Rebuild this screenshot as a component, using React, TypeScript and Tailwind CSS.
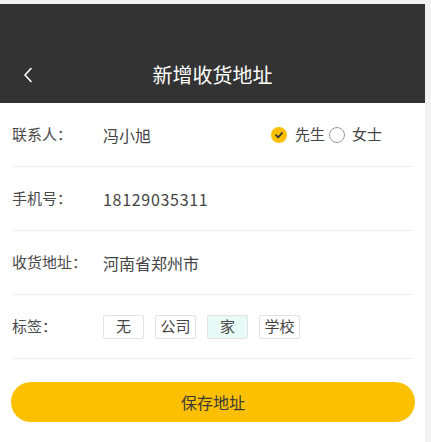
import React from "react";

const font = { fontFamily: '"Noto Sans CJK SC", "Noto Sans", sans-serif' };

function Row({ label, children }: { label: string; children: React.ReactNode }) {
  return (
    <div className="flex h-[64px] items-center border-b border-[#eeeeee]">
      <div className="w-[91px] text-[15px] text-[#4a4a4a]">{label}</div>
      {children}
    </div>
  );
}

export default function App() {
  const tags = ["无", "公司", "家", "学校"];
  return (
    <div className="h-[442px] w-[431px] bg-[#f2f2f2] pt-[4px]" style={font}>
      <div className="h-[438px] w-[425px] bg-white">
        <div className="h-[99px] bg-[#333333] pt-[43px]">
          <div className="relative flex h-[56px] items-center justify-center">
            <svg
              className="absolute left-[22px] top-[20px]"
              width="12"
              height="16"
              viewBox="0 0 12 16"
              fill="none"
            >
              <path d="M9 1.5 L3 8 L9 14.5" stroke="#ffffff" strokeWidth="1.6" strokeLinecap="round" strokeLinejoin="round" />
            </svg>
            <span className="text-[20px] text-white">新增收货地址</span>
          </div>
        </div>
        <div className="px-[12px]">
          <Row label="联系人：">
            <span className="text-[16px] text-[#444]">冯小旭</span>
            <div className="ml-auto mr-[31px] flex items-center text-[15px] text-[#444]">
              <span className="flex h-[16px] w-[16px] items-center justify-center rounded-full bg-[#fcc000]">
                <svg width="10" height="10" viewBox="0 0 10 10" fill="none">
                  <path d="M2 5.2 L4.2 7.3 L8 3" stroke="#333" strokeWidth="1.8" strokeLinecap="round" strokeLinejoin="round" />
                </svg>
              </span>
              <span className="ml-[8px]">先生</span>
              <span className="ml-[4px] h-[16px] w-[16px] rounded-full border border-[#999]" />
              <span className="ml-[7px]">女士</span>
            </div>
          </Row>
          <Row label="手机号：">
            <span className="text-[16px] tracking-[0.7px] text-[#444]">18129035311</span>
          </Row>
          <Row label="收货地址：">
            <span className="text-[16px] text-[#444]">河南省郑州市</span>
          </Row>
          <Row label="标签：">
            <div className="flex gap-[11px]">
              {tags.map((t) => (
                <span
                  key={t}
                  className={
                    "flex h-[24px] w-[41px] items-center justify-center rounded-[2px] border border-[#e3e3e3] text-[15px] text-[#444] " +
                    (t === "家" ? "bg-[#e8fbf7]" : "bg-white")
                  }
                >
                  {t}
                </span>
              ))}
            </div>
          </Row>
        </div>
        <button className="mx-[11px] mt-[23px] flex h-[40px] w-[404px] items-center justify-center rounded-full bg-[#fcc000] text-[16px] text-[#3a3a3a]">
          保存地址
        </button>
      </div>
    </div>
  );
}
